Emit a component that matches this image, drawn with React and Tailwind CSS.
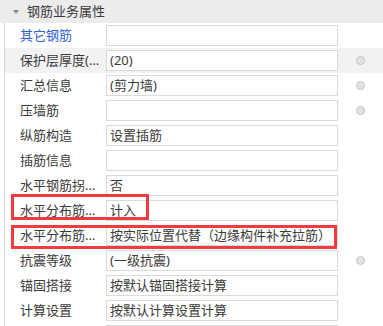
import React from 'react';

const rows = [
  { label: '其它钢筋', value: '', blue: true },
  { label: '保护层厚度(...', value: '(20)', radio: true, active: true },
  { label: '汇总信息', value: '(剪力墙)', radio: true },
  { label: '压墙筋', value: '', radio: true },
  { label: '纵筋构造', value: '设置插筋' },
  { label: '插筋信息', value: '' },
  { label: '水平钢筋拐...', value: '否' },
  { label: '水平分布筋...', value: '计入' },
  { label: '水平分布筋...', value: '按实际位置代替（边缘构件补充拉筋）' },
  { label: '抗震等级', value: '(一级抗震)', radio: true },
  { label: '锚固搭接', value: '按默认锚固搭接计算' },
  { label: '计算设置', value: '按默认计算设置计算' },
  { label: '', value: '' },
];

const Row = ({ label, value, blue, radio, active }) => (
  <div className={`h-[25px] flex items-center ${active ? 'bg-[#f2f2f2]' : ''}`}>
    <div className={`w-[101px] pl-[15px] whitespace-nowrap overflow-hidden text-[13px] ${blue ? 'text-[#2f5fd8]' : 'text-[#3a3a3a]'}`}>
      {label}
    </div>
    <div className="w-[232px] h-[21px] border border-[#dadada] bg-white px-[3px] flex items-center text-[13px] text-[#3a3a3a] whitespace-nowrap overflow-hidden">
      {value}
    </div>
    <div className="flex-1 flex justify-center">
      {radio && <span className="w-[9px] h-[9px] rounded-full bg-[#e2e2e2] border border-[#c4c4c4]" />}
    </div>
  </div>
);

export default function App() {
  return (
    <div
      className="relative w-[383px] h-[326px] overflow-hidden bg-white"
      style={{ fontFamily: '"Noto Sans", "Noto Sans CJK SC", sans-serif' }}
    >
      <div className="h-[23px] bg-[#ececec] flex items-center pl-[13px] gap-[8px]">
        <svg width="6" height="4" viewBox="0 0 6 4">
          <path d="M0 0h6L3 4z" fill="#888" />
        </svg>
        <span className="text-[13px] text-[#3a3a3a]">钢筋业务属性</span>
      </div>
      <div className="ml-[4px] border-l border-[#d4d4d4]">
        {rows.map((r, i) => (
          <Row key={i} {...r} />
        ))}
      </div>

      {/* annotation boxes */}
      <div className="absolute left-[11px] top-[194px] w-[138px] h-[26px] border-[3px] border-[#f03c3c]" />
      <div className="absolute left-[11px] top-[225px] w-[326px] h-[24px] border-[3px] border-[#f03c3c]" />
    </div>
  );
}
